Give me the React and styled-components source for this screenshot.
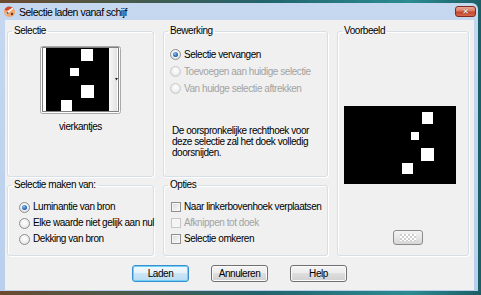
import styled, { createGlobalStyle } from 'styled-components'

const uiFont = `"Liberation Sans", Arial, sans-serif`

const GlobalStyle = createGlobalStyle`
    html, body {
        margin: 0;
        padding: 0;
        overflow: hidden;
    }
    * {
        box-sizing: border-box;
    }
`

const Desktop = styled.div`
    width: 481px;
    height: 295px;
    padding: 3px 3px 4px 0;
    display: flex;
    flex-direction: column;
    background: linear-gradient(90deg, #6b4a2e 0%, #4b5a4a 25%, #22646d 55%, #2b8c92 85%, #1d5e66 100%);
    font-family: ${uiFont};
    font-size: 10px;
    letter-spacing: -0.45px;
    color: #000;
`

const Window = styled.div`
    flex: 1;
    display: flex;
    flex-direction: column;
    background: linear-gradient(#c6d8f0, #b9cfec);
    border-radius: 0 6px 0 0;
`

const TitleBar = styled.div`
    height: 17px;
    display: flex;
    align-items: center;
    gap: 3px;
    padding: 0 2px 0 3px;
`

const TitleText = styled.span`
    flex: 1;
    font-size: 10.5px;
    letter-spacing: -0.5px;
    color: #000;
    line-height: 14px;
`

const CloseButton = styled.div`
    width: 21px;
    height: 11px;
    border: 1px solid #7b2d1f;
    border-radius: 3px;
    background: linear-gradient(#eca593 0%, #d97b63 45%, #c2452b 55%, #d6694d 100%);
    display: flex;
    align-items: center;
    justify-content: center;
    color: #fff;
    font-family: "DejaVu Sans", sans-serif;
    font-weight: bold;
    font-size: 8px;
    line-height: 9px;
    letter-spacing: 0;
    text-shadow: 0 0 1px #5a1c10;
`

const Body = styled.div`
    flex: 1;
    margin: 0 4px 1px 5px;
    background: #f0f0f0;
    padding: 5px 6px 8px 2px;
    display: flex;
    flex-direction: column;
`

const Panels = styled.div`
    display: grid;
    grid-template-columns: 147px 165px 132px;
    grid-template-rows: 152px 77px;
    column-gap: 9px;
    row-gap: 2px;
`

const GroupBox = styled.fieldset`
    margin: 0;
    padding: 0;
    min-width: 0;
    border: 1px solid #d5dfe5;
    border-radius: 3px;
    box-shadow: inset 1px 1px 0 #fff, 1px 1px 0 #fff;
    display: flex;
    flex-direction: column;
    align-items: ${(props) => props.$center ? 'center' : 'flex-start'};
    grid-column: ${(props) => props.$col};
    grid-row: ${(props) => props.$row};
`

const Legend = styled.legend`
    margin-left: 4px;
    padding: 0 2px;
    line-height: 12px;
`

const Thumb = styled.svg`
    display: block;
    margin-top: 9px;
`

const Caption = styled.div`
    margin-top: 7px;
    line-height: 12px;
`

const OptionList = styled.div`
    display: flex;
    flex-direction: column;
    padding: ${(props) => props.$pad};
`

const Option = styled.label`
    display: flex;
    align-items: center;
    gap: 3px;
    height: ${(props) => props.$h || 16}px;
    line-height: 12px;
    white-space: nowrap;
    color: ${(props) => props.$disabled ? '#a3a3a3' : '#000'};
`

const RadioDot = styled.span`
    flex: none;
    width: 11px;
    height: 11px;
    border-radius: 50%;
    border: 1px solid ${(props) => props.$disabled ? '#c9cacb' : '#8e8f8f'};
    background: radial-gradient(circle at 50% 40%, #ffffff 0%, #f2f2f2 45%, #d6d6d6 100%);
    display: flex;
    align-items: center;
    justify-content: center;

    &::after {
        content: '';
        width: 5px;
        height: 5px;
        border-radius: 50%;
        background: radial-gradient(circle at 40% 35%, #8ec4f2 0%, #2c6cbc 55%, #163f7c 100%);
        display: ${(props) => props.$checked ? 'block' : 'none'};
    }
`

const CheckBox = styled.span`
    flex: none;
    width: 10px;
    height: 10px;
    border: 1px solid ${(props) => props.$disabled ? '#c6c6c6' : '#8f8f8f'};
    background: ${(props) => props.$disabled ? '#f4f4f4' : 'linear-gradient(135deg, #d9d9d9 0%, #eeeeee 60%, #fbfbfb 100%)'};
    box-shadow: inset 0 0 0 1px #f6f6f6;
`

const Description = styled.p`
    margin: 28px 0 0 8px;
    line-height: 11px;
`

const Preview = styled.svg`
    display: block;
    margin: 69px 0 0 6px;
`

const TransparencyButton = styled.div`
    margin: 46px 0 0 55px;
    width: 30px;
    height: 15px;
    border: 1px solid #8c8c8c;
    border-radius: 3px;
    background: linear-gradient(#f4f4f4 0%, #e6e6e6 50%, #d6d6d6 100%);
    display: flex;
    align-items: center;
    justify-content: center;
`

const Checker = styled.span`
    width: 16px;
    height: 7px;
    background: repeating-conic-gradient(#ffffff 0% 25%, #cfcfcf 0% 50%) 0 0 / 4px 4px;
`

const ButtonRow = styled.div`
    margin-top: 9px;
    padding-left: 4px;
    display: flex;
    justify-content: center;
    gap: 22px;
`

const DialogButton = styled.button`
    width: 57px;
    height: 17px;
    padding: 0;
    font-family: ${uiFont};
    font-size: 10px;
    letter-spacing: -0.45px;
    line-height: 12px;
    color: #000;
    border-radius: 3px;
    border: 1px solid ${(props) => props.$default ? '#3a8fd0' : '#707070'};
    background: ${(props) => props.$default
        ? 'linear-gradient(#f1f9fe 0%, #e4f2fb 50%, #cbe6f6 50%, #b9dcf2 100%)'
        : 'linear-gradient(#f4f4f4 0%, #ececec 50%, #dedede 50%, #d0d0d0 100%)'};
    box-shadow: ${(props) => props.$default ? 'inset 0 0 0 1px #6fd1f6' : 'inset 0 0 0 1px #fbfbfb'};
`

function AppIcon() {
    return (
        <svg width="13" height="13" viewBox="0 0 13 13">
            <ellipse cx="6.5" cy="7" rx="5.5" ry="5" fill="#f3a56a" />
            <path d="M1.5 5 Q3 1 7 1.5 Q10 2 11 4 Q8 3 6 4.5 Q4 6 1.5 5 Z" fill="#d2452a" />
            <path d="M3 9 L10 3" stroke="#ffffff" strokeWidth="1.3" />
            <circle cx="4.5" cy="8" r="1" fill="#2c5fb8" />
            <circle cx="9" cy="9" r="1.2" fill="#6d3a1c" />
        </svg>
    )
}

function SelectionThumb() {
    return (
        <Thumb width="81" height="68" viewBox="0 0 81 68">
            <defs>
                <linearGradient id="strip" x1="0" x2="1" y1="0" y2="0">
                    <stop offset="0" stopColor="#f8f8f8" />
                    <stop offset="1" stopColor="#e2e2e2" />
                </linearGradient>
            </defs>
            <rect x="0.5" y="0.5" width="80" height="67" rx="2" fill="#ffffff" stroke="#a9a9a9" />
            <rect x="6" y="2" width="63" height="63" fill="#000" />
            <rect x="69" y="2" width="8" height="63" fill="url(#strip)" />
            <rect x="41" y="3" width="12" height="12" fill="#fff" />
            <rect x="30" y="22" width="9" height="8" fill="#fff" />
            <rect x="41" y="39" width="13" height="13" fill="#fff" />
            <rect x="21" y="54" width="11" height="11" fill="#fff" />
            <rect x="2.5" y="1.5" width="76" height="64" fill="none" stroke="#000" strokeDasharray="1 1" />
            <path d="M75 32 L78 32 L76.5 34.5 Z" fill="#222" />
        </Thumb>
    )
}

function PreviewCanvas() {
    return (
        <Preview width="112" height="78" viewBox="0 0 112 78">
            <rect x="0" y="0" width="112" height="78" fill="#000" />
            <rect x="78" y="6" width="11" height="12" fill="#fff" />
            <rect x="67" y="26" width="8" height="8" fill="#fff" />
            <rect x="77" y="42" width="13" height="13" fill="#fff" />
            <rect x="58" y="57" width="11" height="11" fill="#fff" />
        </Preview>
    )
}

function App() {
    return (
        <Desktop>
            <GlobalStyle />
            <Window>
                <TitleBar>
                    <AppIcon />
                    <TitleText>Selectie laden vanaf schijf</TitleText>
                    <CloseButton>✕</CloseButton>
                </TitleBar>
                <Body>
                    <Panels>
                        <GroupBox $col="1" $row="1" $center>
                            <Legend>Selectie</Legend>
                            <SelectionThumb />
                            <Caption>vierkantjes</Caption>
                        </GroupBox>

                        <GroupBox $col="2" $row="1">
                            <Legend>Bewerking</Legend>
                            <OptionList $pad="9px 0 0 6px">
                                <Option $h={17}><RadioDot $checked />Selectie vervangen</Option>
                                <Option $h={17} $disabled><RadioDot $disabled />Toevoegen aan huidige selectie</Option>
                                <Option $h={17} $disabled><RadioDot $disabled />Van huidge selectie aftrekken</Option>
                            </OptionList>
                            <Description>
                                De oorspronkelijke rechthoek voor<br />
                                deze selectie zal het doek volledig<br />
                                doorsnijden.
                            </Description>
                        </GroupBox>

                        <GroupBox $col="3" $row="1 / span 2">
                            <Legend>Voorbeeld</Legend>
                            <PreviewCanvas />
                            <TransparencyButton><Checker /></TransparencyButton>
                        </GroupBox>

                        <GroupBox $col="1" $row="2">
                            <Legend>Selectie maken van:</Legend>
                            <OptionList $pad="8px 0 0 11px">
                                <Option><RadioDot $checked />Luminantie van bron</Option>
                                <Option><RadioDot />Elke waarde niet gelijk aan nul</Option>
                                <Option><RadioDot />Dekking van bron</Option>
                            </OptionList>
                        </GroupBox>

                        <GroupBox $col="2" $row="2">
                            <Legend>Opties</Legend>
                            <OptionList $pad="8px 0 0 7px">
                                <Option><CheckBox />Naar linkerbovenhoek verplaatsen</Option>
                                <Option $disabled><CheckBox $disabled />Afknippen tot doek</Option>
                                <Option><CheckBox />Selectie omkeren</Option>
                            </OptionList>
                        </GroupBox>
                    </Panels>
                    <ButtonRow>
                        <DialogButton $default>Laden</DialogButton>
                        <DialogButton>Annuleren</DialogButton>
                        <DialogButton>Help</DialogButton>
                    </ButtonRow>
                </Body>
            </Window>
        </Desktop>
    )
}

export default App
